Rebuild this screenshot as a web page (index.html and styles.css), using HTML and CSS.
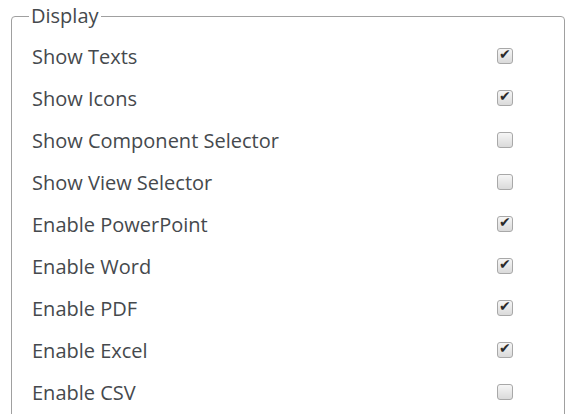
FILE: index.html
```html
<!DOCTYPE html>
<html>
  <head>
    <title>Display Settings</title>
    <link rel="stylesheet" href="styles.css">
  </head>
  <body>
    <fieldset class="group">
      <legend>Display</legend>
      <div class="row"><label>Show Texts</label><input type="checkbox" checked /></div>
      <div class="row"><label>Show Icons</label><input type="checkbox" checked /></div>
      <div class="row"><label>Show Component Selector</label><input type="checkbox" /></div>
      <div class="row"><label>Show View Selector</label><input type="checkbox" /></div>
      <div class="row"><label>Enable PowerPoint</label><input type="checkbox" checked /></div>
      <div class="row"><label>Enable Word</label><input type="checkbox" checked /></div>
      <div class="row"><label>Enable PDF</label><input type="checkbox" checked /></div>
      <div class="row"><label>Enable Excel</label><input type="checkbox" checked /></div>
      <div class="row"><label>Enable CSV</label><input type="checkbox" /></div>
    </fieldset>
  </body>
</html>
```

FILE: styles.css
```css
body {
  margin: 0;
  padding: 7px 1px 0 11px;
  font-family: "Open Sans", sans-serif;
  color: #45494d;
  background: #fff;
  overflow: hidden;
}

/* outer group box */
.group {
  margin: 0;
  border: 1px solid #a0a0a0;
  border-radius: 4px;
  padding: 10px 51px 40px 20px;
}

.group legend {
  font-size: 20px;
  padding: 0 2px;
  margin-left: -3px;
  line-height: 18px;
}

.row {
  height: 42px;
  display: flex;
  align-items: center;
  justify-content: space-between;
  font-size: 20px;
}

.row input {
  appearance: none;
  -webkit-appearance: none;
  margin: 0;
  width: 16px;
  height: 16px;
  border: 1px solid #a8a8a8;
  border-radius: 3px;
  background: linear-gradient(#f6f6f6, #dadada);
  position: relative;
}

.row input:checked::after {
  content: "\2714";
  position: absolute;
  left: 1px;
  top: -3px;
  font-family: "DejaVu Sans", sans-serif;
  font-size: 14px;
  color: #2a2a2a;
}
```
